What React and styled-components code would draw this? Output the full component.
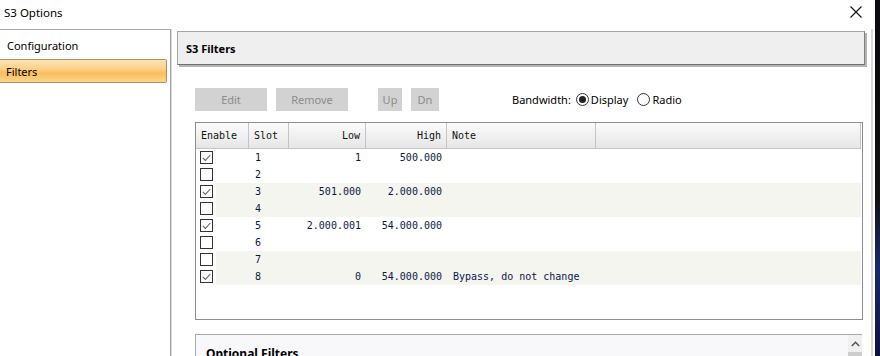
import React from "react"
import styled, { createGlobalStyle } from "styled-components"

const GlobalStyle = createGlobalStyle`
  html, body {
    margin: 0;
    padding: 0;
    background: #ffffff;
  }
  body {
    font-family: "Noto Sans", "Liberation Sans", sans-serif;
    font-size: 11px;
    color: #000;
  }
`

const Screen = styled.div`
  width: 880px;
  height: 356px;
  display: flex;
  overflow: hidden;
`

const Window = styled.div`
  flex: 1;
  display: flex;
  flex-direction: column;
  background: #fff;
`

const Backdrop = styled.div`
  width: 5px;
  background: linear-gradient(#0a0a0f 0%, #111 55%, #1a2a6a 75%, #0b1240 100%);
`

const TitleBar = styled.div`
  height: 29px;
  flex-shrink: 0;
  display: flex;
  align-items: center;
  justify-content: space-between;
  padding: 0 13px 5px 4px;
  box-sizing: border-box;
  font-size: 11.5px;
`

const Body = styled.div`
  flex: 1;
  display: flex;
  min-height: 0;
`

const Sidebar = styled.div`
  width: 170px;
  flex-shrink: 0;
  border-top: 1px solid #a7a7a7;
  border-right: 1px solid #a0a0a0;
  box-shadow: 1px 0 0 #dcdcdc;
  padding-top: 3px;
  display: flex;
  flex-direction: column;
  gap: 2px;
`

const NavItem = styled.div`
  height: 24px;
  width: 167px;
  box-sizing: border-box;
  display: flex;
  align-items: center;
  padding-left: ${p => (p.$active ? "6px" : "7px")};
  font-size: 11px;
  border: 1px solid ${p => (p.$active ? "#b49060" : "transparent")};
  border-left: none;
  border-radius: 0 2px 2px 0;
  background: ${p =>
    p.$active
      ? "linear-gradient(#fde3b4 0%, #fcd089 40%, #fbbd5c 60%, #fcd58a 100%)"
      : "transparent"};
`

const Main = styled.div`
  flex: 1;
  display: flex;
  flex-direction: column;
  padding: 2px 4px 0 6px;
  min-width: 0;
`

const EdgeLine = styled.div`
  width: 2px;
  margin: 0 2px 0 0;
  background: #dadada;
`

const SectionHead = styled.div`
  height: 32px;
  flex-shrink: 0;
  border: 1px solid #a4a4a4;
  border-right-color: #808080;
  border-bottom-color: #707070;
  box-shadow: 2px 2px 0 #b5b5b5;
  background: #efefef;
  display: flex;
  align-items: center;
  padding-left: 8px;
  font-weight: bold;
  font-size: 11px;
  margin-right: 2px;
`

const Inner = styled.div`
  flex-shrink: 0;
  padding: 23px 4px 0 18px;
  display: flex;
  flex-direction: column;
`

const Toolbar = styled.div`
  display: flex;
  align-items: center;
  height: 23px;
`

const Btn = styled.div`
  width: ${p => p.$w}px;
  height: 23px;
  margin-right: ${p => p.$gap || 9}px;
  background: #d2d2d2;
  color: #8c8c8c;
  display: flex;
  align-items: center;
  justify-content: center;
  font-size: 11px;
`

const Spacer = styled.div`
  width: ${p => p.$w}px;
`

const Label = styled.span`
  font-size: 11px;
  margin-right: 5px;
`

const RadioWrap = styled.label`
  display: flex;
  align-items: center;
  font-size: 11px;
  margin-right: 9px;
`

const RadioDot = styled.span`
  width: 11px;
  height: 11px;
  border: 1px solid #333;
  border-radius: 50%;
  margin-right: 2px;
  display: flex;
  align-items: center;
  justify-content: center;
  &::after {
    content: "";
    width: 7px;
    height: 7px;
    border-radius: 50%;
    background: ${p => (p.$on ? "#222" : "transparent")};
  }
`

const Table = styled.div`
  margin-top: 11px;
  width: 668px;
  height: 198px;
  box-sizing: border-box;
  border: 1px solid #8d8d93;
  font-family: "DejaVu Sans Mono", "Liberation Mono", monospace;
  font-size: 10px;
`

const cols = "53px 40px 77px 81px 149px 1fr"

const HeadRow = styled.div`
  display: grid;
  grid-template-columns: ${cols};
  height: 25px;
  margin-right: 1px;
  background: linear-gradient(#fbfbfb, #e6e6e6);
  border-bottom: 1px solid #c4c4c4;
`

const HeadCell = styled.div`
  border-right: 1px solid #c4c4c4;
  display: flex;
  align-items: center;
  justify-content: ${p => (p.$right ? "flex-end" : "flex-start")};
  padding: 0 5px;
  color: #111;
`

const Row = styled.div`
  display: flex;
  height: 17px;
  margin-right: 1px;
`

const CheckCell = styled.div`
  width: 20px;
  display: flex;
  align-items: center;
  padding-left: 4px;
  box-sizing: border-box;
`

const RowBody = styled.div`
  flex: 1;
  display: grid;
  grid-template-columns: 33px 40px 77px 81px 1fr;
  background: ${p => (p.$shade ? "#f5f5f0" : "transparent")};
  color: #0a1846;
`

const Cell = styled.div`
  display: flex;
  align-items: center;
  justify-content: ${p => (p.$right ? "flex-end" : "flex-start")};
  padding: 0 ${p => (p.$right ? "5px" : "6px")};
  white-space: pre;
`

const Box = styled.span`
  width: 11px;
  height: 11px;
  border: 1px solid #333;
  background: #fff;
  display: flex;
  align-items: center;
  justify-content: center;
`

const Optional = styled.div`
  margin-top: 14px;
  width: 666px;
  height: 40px;
  border-top: 1px solid #a9a9ad;
  border-left: 1px solid #a9a9ad;
  background: #f8f8fb;
  display: flex;
  justify-content: space-between;
`

const OptTitle = styled.div`
  padding: 10px 0 0 10px;
  font-weight: bold;
  font-size: 12px;
`

const ScrollBar = styled.div`
  width: 14px;
  display: flex;
  flex-direction: column;
  background: #f0f0f0;
`

const ScrollBtn = styled.div`
  height: 17px;
  display: flex;
  align-items: center;
  justify-content: center;
`

const Thumb = styled.div`
  flex: 1;
  background: #cdcdcd;
`

const rows = [
  { on: true, slot: 1, low: "1", high: "500.000", note: "" },
  { on: false, slot: 2, low: "", high: "", note: "" },
  { on: true, slot: 3, low: "501.000", high: "2.000.000", note: "" },
  { on: false, slot: 4, low: "", high: "", note: "" },
  { on: true, slot: 5, low: "2.000.001", high: "54.000.000", note: "" },
  { on: false, slot: 6, low: "", high: "", note: "" },
  { on: false, slot: 7, low: "", high: "", note: "" },
  { on: true, slot: 8, low: "0", high: "54.000.000", note: "Bypass, do not change" },
]

function Check({ on }) {
  return (
    <Box>
      {on && (
        <svg width="9" height="8" viewBox="0 0 9 8">
          <path d="M0.8 3.8 L3.4 6.4 L8.3 1" fill="none" stroke="#666" strokeWidth="1.1" />
        </svg>
      )}
    </Box>
  )
}

export default function App() {
  return (
    <Screen>
      <GlobalStyle />
      <Window>
        <TitleBar>
          <span>S3 Options</span>
          <svg width="12" height="12" viewBox="0 0 12 12">
            <path d="M0.5 0.5 L11.5 11.5 M11.5 0.5 L0.5 11.5" stroke="#111" strokeWidth="1.1" />
          </svg>
        </TitleBar>
        <Body>
          <Sidebar>
            <NavItem>Configuration</NavItem>
            <NavItem $active>Filters</NavItem>
          </Sidebar>
          <Main>
            <SectionHead>S3 Filters</SectionHead>
            <Inner>
              <Toolbar>
                <Btn $w={72}>Edit</Btn>
                <Btn $w={72} $gap={30}>Remove</Btn>
                <Btn $w={24}>Up</Btn>
                <Btn $w={28}>Dn</Btn>
                <Spacer $w={64} />
                <Label>Bandwidth:</Label>
                <RadioWrap>
                  <RadioDot $on />
                  Display
                </RadioWrap>
                <RadioWrap>
                  <RadioDot />
                  Radio
                </RadioWrap>
              </Toolbar>
              <Table>
                <HeadRow>
                  <HeadCell>Enable</HeadCell>
                  <HeadCell>Slot</HeadCell>
                  <HeadCell $right>Low</HeadCell>
                  <HeadCell $right>High</HeadCell>
                  <HeadCell>Note</HeadCell>
                  <HeadCell />
                </HeadRow>
                {rows.map((r, i) => (
                  <Row key={r.slot}>
                    <CheckCell>
                      <Check on={r.on} />
                    </CheckCell>
                    <RowBody $shade={Math.floor(i / 2) % 2 === 1}>
                      <Cell />
                      <Cell>{r.slot}</Cell>
                      <Cell $right>{r.low}</Cell>
                      <Cell $right>{r.high}</Cell>
                      <Cell>{r.note}</Cell>
                    </RowBody>
                  </Row>
                ))}
              </Table>
              <Optional>
                <OptTitle>Optional Filters</OptTitle>
                <ScrollBar>
                  <ScrollBtn>
                    <svg width="9" height="6" viewBox="0 0 9 6">
                      <path d="M0.8 5 L4.5 1.3 L8.2 5" fill="none" stroke="#555" strokeWidth="1.6" />
                    </svg>
                  </ScrollBtn>
                  <Thumb />
                </ScrollBar>
              </Optional>
            </Inner>
          </Main>
          <EdgeLine />
        </Body>
      </Window>
      <Backdrop />
    </Screen>
  )
}
